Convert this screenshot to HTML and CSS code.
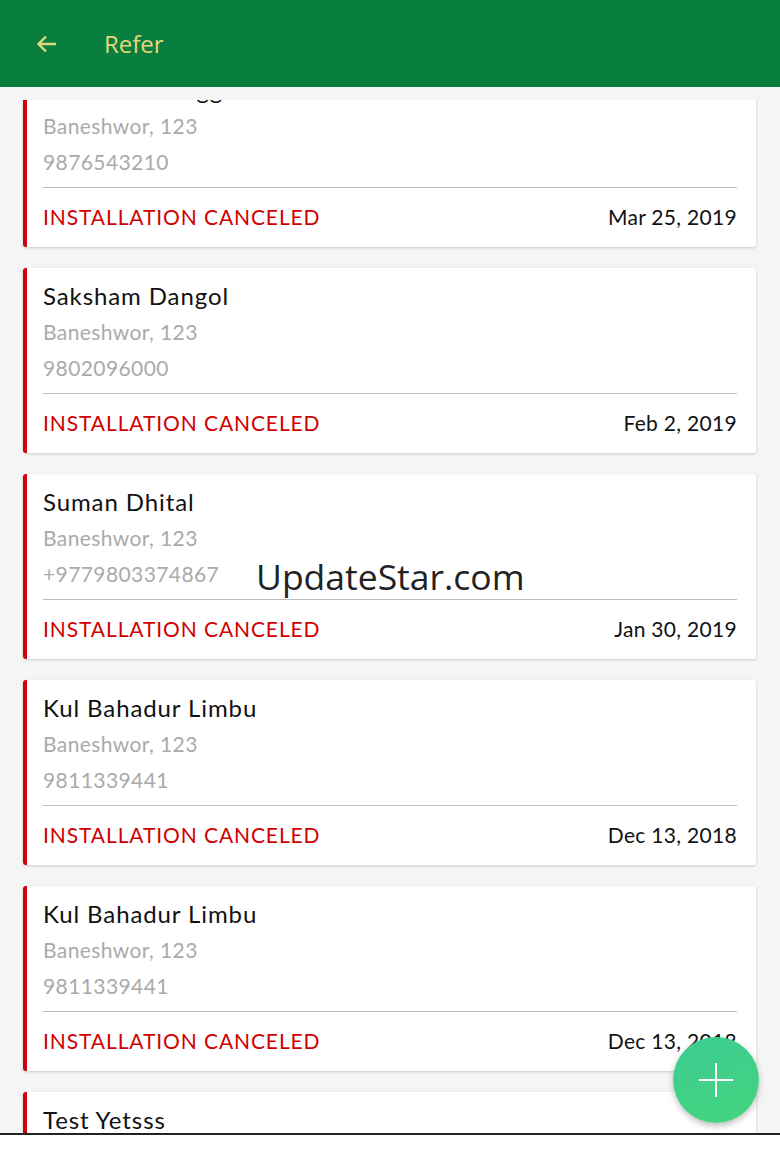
FILE: index.html
```html
<!DOCTYPE html>
<html lang="en">

<head>
    <meta charset="UTF-8">
    <meta name="viewport" content="width=device-width, initial-scale=1.0">
    <title>Refer</title>
    <link rel="stylesheet" href="styles.css">
</head>

<body>
    <header class="topbar">
        <svg class="back" width="24" height="24" viewBox="0 0 24 24">
            <path d="M21 12H4M11 4.5L3.5 12L11 19.5" fill="none" stroke="#e3d77c" stroke-width="2.4" />
        </svg>
        <span class="title">Refer</span>
    </header>

    <div class="list">
        <div class="list-inner">
            <div class="card">
                <div class="name">Sudarshan Baggs</div>
                <div class="info">Baneshwor, 123</div>
                <div class="info">9876543210</div>
                <div class="foot">
                    <span class="status">INSTALLATION CANCELED</span>
                    <span class="date">Mar 25, 2019</span>
                </div>
            </div>
            <div class="card">
                <div class="name">Saksham Dangol</div>
                <div class="info">Baneshwor, 123</div>
                <div class="info">9802096000</div>
                <div class="foot">
                    <span class="status">INSTALLATION CANCELED</span>
                    <span class="date">Feb 2, 2019</span>
                </div>
            </div>
            <div class="card">
                <div class="name">Suman Dhital</div>
                <div class="info">Baneshwor, 123</div>
                <div class="info">+9779803374867</div>
                <div class="foot">
                    <span class="status">INSTALLATION CANCELED</span>
                    <span class="date">Jan 30, 2019</span>
                </div>
            </div>
            <div class="card">
                <div class="name">Kul Bahadur Limbu</div>
                <div class="info">Baneshwor, 123</div>
                <div class="info">9811339441</div>
                <div class="foot">
                    <span class="status">INSTALLATION CANCELED</span>
                    <span class="date">Dec 13, 2018</span>
                </div>
            </div>
            <div class="card">
                <div class="name">Kul Bahadur Limbu</div>
                <div class="info">Baneshwor, 123</div>
                <div class="info">9811339441</div>
                <div class="foot">
                    <span class="status">INSTALLATION CANCELED</span>
                    <span class="date">Dec 13, 2018</span>
                </div>
            </div>
            <div class="card">
                <div class="name">Test Yetsss</div>
                <div class="info">Baneshwor, 123</div>
                <div class="info">9800000000</div>
            </div>
        </div>
        <div class="watermark">UpdateStar.com</div>
        <div class="fab">
            <svg width="36" height="36" viewBox="0 0 36 36">
                <path d="M18 1V35M1 18H35" stroke="#fff" stroke-width="2" />
            </svg>
        </div>
    </div>
    <div class="bottom-edge"></div>
</body>

</html>
```

FILE: styles.css
```css
* {
    margin: 0;
    box-sizing: border-box;
}

body {
    margin: 0;
    background-color: #f5f5f5;
    font-family: 'Lato', 'Noto Sans', sans-serif;
}

.topbar {
    height: 87px;
    background-color: #087f3e;
    display: flex;
    align-items: center;
    padding-left: 35px;
}

.back {
    margin-right: 45px;
}

.title {
    color: #e3d77c;
    font-size: 24px;
    font-family: 'Open Sans', sans-serif;
}

.list {
    position: relative;
    margin-top: 13px;
    height: 1033px;
    overflow: hidden;
}

.list-inner {
    margin-top: -38px;
}

.card {
    background-color: #fff;
    margin: 0 24px 21px 23px;
    border-left: 4px solid #d0000f;
    border-radius: 3px;
    box-shadow: 0 1px 3px rgba(0, 0, 0, 0.18);
    padding: 10px 19px 12px 16px;
    height: 185px;
}

.name {
    font-size: 24px;
    line-height: 36px;
    letter-spacing: 0.9px;
    color: #111;
}

.info {
    font-size: 21px;
    line-height: 36px;
    letter-spacing: 0.4px;
    color: #aaa;
}

.foot {
    margin-top: 7px;
    border-top: 1px solid #bdbdbd;
    padding-top: 11px;
    display: flex;
    justify-content: space-between;
    line-height: 36px;
}

.status {
    color: #d00000;
    font-size: 21px;
    letter-spacing: 0.9px;
}

.date {
    color: #111;
    font-size: 21px;
    letter-spacing: 0.3px;
}

.watermark {
    position: absolute;
    top: 452px;
    left: 256px;
    font-family: 'Open Sans', sans-serif;
    font-size: 35.5px;
    color: #222;
}

.fab {
    position: absolute;
    left: 673px;
    top: 937px;
    width: 86px;
    height: 86px;
    border-radius: 50%;
    background: linear-gradient(160deg, #3ccc94, #45d47c);
    box-shadow: 0 3px 6px rgba(0, 0, 0, 0.25);
    display: flex;
    align-items: center;
    justify-content: center;
}

.bottom-edge {
    height: 16px;
    border-top: 2px solid #222;
    background-color: #fff;
}
```
